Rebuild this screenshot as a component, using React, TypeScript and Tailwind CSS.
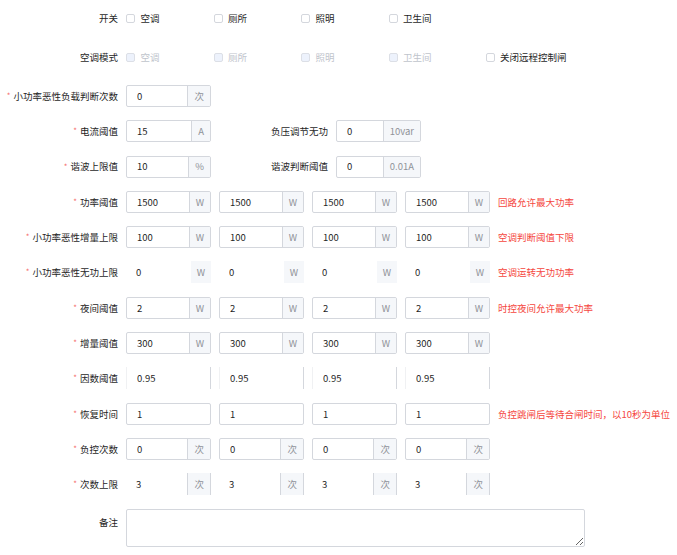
import React from "react";

type Variant = "full" | "bare" | "rightOnly" | "bareSuffixBox";

const FONT = { fontFamily: '"Noto Sans CJK SC", "Noto Sans", sans-serif' };

const Label = ({ text, required, w = "w-[118px]" }: { text: string; required?: boolean; w?: string }) => (
  <div className={`${w} shrink-0 mr-[8px] flex justify-end items-center text-[#1f1f1f] whitespace-nowrap`}>
    {required && <span className="text-[#f56c6c] text-[8px] mr-[3px] leading-none">*</span>}
    {text}
  </div>
);

const Field = ({ value, suffix, variant = "full" }: { value: string; suffix?: string; variant?: Variant }) => {
  const box =
    variant === "full"
      ? "border border-[#d4d7dd] rounded-[2px]"
      : variant === "rightOnly"
      ? "border-r border-[#d4d7dd] border-l border-l-[#f0f1f3]"
      : "";
  const sfx =
    variant === "full"
      ? "border-l border-[#d4d7dd]"
      : variant === "bareSuffixBox"
      ? "border-l border-r border-[#d4d7dd]"
      : "";
  return (
    <div className={`flex h-[22px] w-[85px] shrink-0 overflow-hidden bg-white ${box}`}>
      <input
        readOnly
        value={value}
        className="flex-1 min-w-0 pl-[10px] bg-transparent outline-none text-[#1f1f1f]"
      />
      {suffix && (
        <div className={`px-[6px] flex items-center bg-[#f5f7fa] text-[#909399] ${sfx}`}>{suffix}</div>
      )}
    </div>
  );
};

const Row = ({ children, mb = "mb-[13.3px]" }: { children: React.ReactNode; mb?: string }) => (
  <div className={`flex items-center h-[22px] ${mb}`}>{children}</div>
);

const Check = ({ text, disabled }: { text: string; disabled?: boolean }) => (
  <label className="flex items-center mr-[54px]">
    <span
      className={`w-[9px] h-[9px] rounded-[2px] border ${
        disabled ? "bg-[#edf2fc] border-[#dcdfe6]" : "bg-white border-[#d4d7dd]"
      }`}
    />
    <span className={`ml-[5.5px] ${disabled ? "text-[#c0c4cc]" : "text-[#1f1f1f]"}`}>{text}</span>
  </label>
);

const quad = [
  { label: "功率阈值", values: ["1500", "1500", "1500", "1500"], suffix: "W", note: "回路允许最大功率" },
  { label: "小功率恶性增量上限", values: ["100", "100", "100", "100"], suffix: "W", note: "空调判断阈值下限" },
  { label: "小功率恶性无功上限", values: ["0", "0", "0", "0"], suffix: "W", note: "空调运转无功功率", variant: "bare" as Variant },
  { label: "夜间阈值", values: ["2", "2", "2", "2"], suffix: "W", note: "时控夜间允许最大功率" },
  { label: "增量阈值", values: ["300", "300", "300", "300"], suffix: "W" },
  { label: "因数阈值", values: ["0.95", "0.95", "0.95", "0.95"], variant: "rightOnly" as Variant },
  { label: "恢复时间", values: ["1", "1", "1", "1"], note: "负控跳闸后等待合闸时间，以10秒为单位" },
  { label: "负控次数", values: ["0", "0", "0", "0"], suffix: "次" },
  { label: "次数上限", values: ["3", "3", "3", "3"], suffix: "次", variant: "bareSuffixBox" as Variant },
];

export default function App() {
  const rooms = ["空调", "厕所", "照明", "卫生间"];
  return (
    <div className="w-[677px] h-[555px] bg-white overflow-hidden text-[9.5px] pt-[7px]" style={FONT}>
      <Row mb="mb-[17px]">
        <Label text="开关" />
        {rooms.map((r) => (
          <Check key={r} text={r} />
        ))}
      </Row>
      <Row mb="mb-[17px]">
        <Label text="空调模式" />
        {rooms.map((r) => (
          <Check key={r} text={r} disabled />
        ))}
        <Check text="关闭远程控制闸" />
      </Row>
      <Row>
        <Label text="小功率恶性负载判断次数" required />
        <Field value="0" suffix="次" />
      </Row>
      <Row>
        <Label text="电流阈值" required />
        <Field value="15" suffix="A" />
        <Label text="负压调节无功" w="w-[117px]" />
        <Field value="0" suffix="10var" />
      </Row>
      <Row>
        <Label text="谐波上限值" required />
        <Field value="10" suffix="%" />
        <Label text="谐波判断阈值" w="w-[117px]" />
        <Field value="0" suffix="0.01A" />
      </Row>
      {quad.map((q) => (
        <Row key={q.label}>
          <Label text={q.label} required />
          <div className="flex gap-[8px]">
            {q.values.map((v, i) => (
              <Field key={i} value={v} suffix={q.suffix} variant={q.variant} />
            ))}
          </div>
          {q.note && <div className="ml-[8px] text-[#f5473e] whitespace-nowrap">{q.note}</div>}
        </Row>
      ))}
      <div className="flex items-start">
        <div className="w-[118px] shrink-0 mr-[8px] text-right text-[#1f1f1f] pt-[6px]">备注</div>
        <textarea className="w-[459px] h-[38px] border border-[#d4d7dd] rounded-[2px] outline-none px-[10px] py-[4px]" />
      </div>
    </div>
  );
}
